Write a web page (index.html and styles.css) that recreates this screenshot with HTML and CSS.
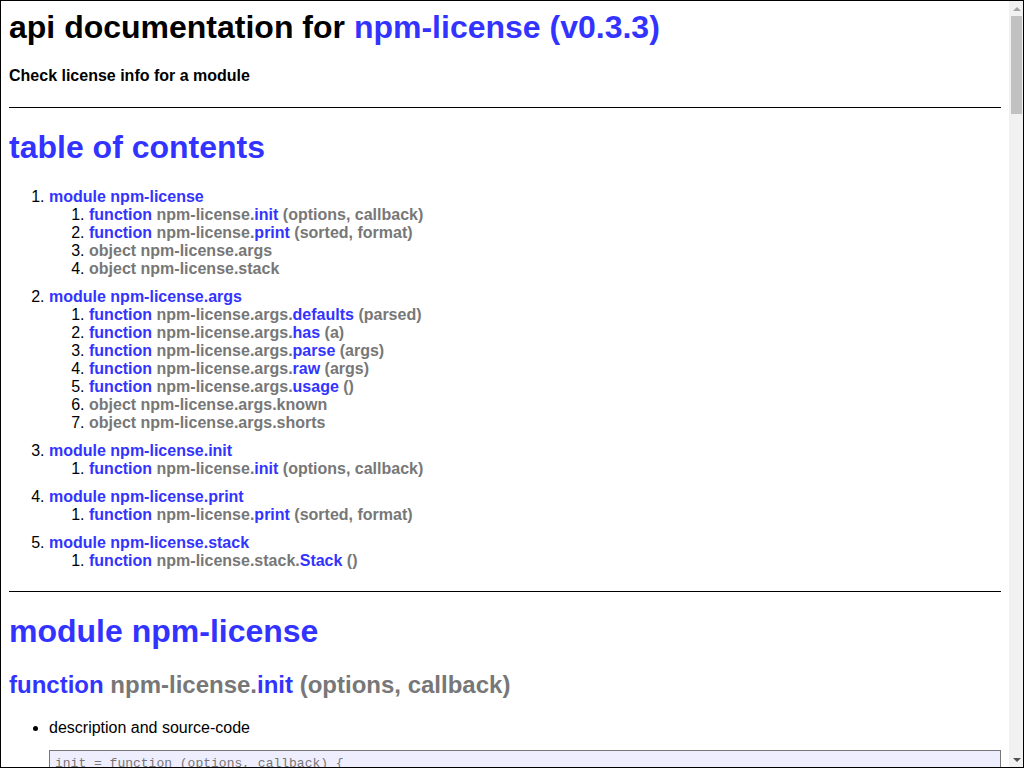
FILE: index.html
```html
<!DOCTYPE html>
<html lang="en">
<head>
<meta charset="utf-8">
<title>api documentation for npm-license (v0.3.3)</title>
<link rel="stylesheet" href="styles.css">
</head>
<body>
<div class="window">
<div class="viewport">
<div class="apidoc">
  <h1 class="doc-title">api documentation for <a class="lnk" href="#">npm-license (v0.3.3)</a></h1>
  <h4 class="doc-desc">Check license info for a module</h4>

  <div class="section">
    <h1 class="section-title"><a class="lnk" href="#toc">table of contents</a></h1>
    <ol class="toc">
      <li class="module-li"><a class="lnk" href="#m1">module npm-license</a>
        <ol>
          <li><a class="lnk" href="#e1">function <span class="sig">npm-license.</span>init <span class="sig">(options, callback)</span></a></li>
          <li><a class="lnk" href="#e2">function <span class="sig">npm-license.</span>print <span class="sig">(sorted, format)</span></a></li>
          <li><span class="sig">object npm-license.args</span></li>
          <li><span class="sig">object npm-license.stack</span></li>
        </ol>
      </li>
      <li class="module-li"><a class="lnk" href="#m2">module npm-license.args</a>
        <ol>
          <li><a class="lnk" href="#e3">function <span class="sig">npm-license.args.</span>defaults <span class="sig">(parsed)</span></a></li>
          <li><a class="lnk" href="#e4">function <span class="sig">npm-license.args.</span>has <span class="sig">(a)</span></a></li>
          <li><a class="lnk" href="#e5">function <span class="sig">npm-license.args.</span>parse <span class="sig">(args)</span></a></li>
          <li><a class="lnk" href="#e6">function <span class="sig">npm-license.args.</span>raw <span class="sig">(args)</span></a></li>
          <li><a class="lnk" href="#e7">function <span class="sig">npm-license.args.</span>usage <span class="sig">()</span></a></li>
          <li><span class="sig">object npm-license.args.known</span></li>
          <li><span class="sig">object npm-license.args.shorts</span></li>
        </ol>
      </li>
      <li class="module-li"><a class="lnk" href="#m3">module npm-license.init</a>
        <ol>
          <li><a class="lnk" href="#e8">function <span class="sig">npm-license.</span>init <span class="sig">(options, callback)</span></a></li>
        </ol>
      </li>
      <li class="module-li"><a class="lnk" href="#m4">module npm-license.print</a>
        <ol>
          <li><a class="lnk" href="#e9">function <span class="sig">npm-license.</span>print <span class="sig">(sorted, format)</span></a></li>
        </ol>
      </li>
      <li class="module-li"><a class="lnk" href="#m5">module npm-license.stack</a>
        <ol>
          <li><a class="lnk" href="#e10">function <span class="sig">npm-license.stack.</span>Stack <span class="sig">()</span></a></li>
        </ol>
      </li>
    </ol>
  </div>

  <div class="section">
    <h1 class="section-title"><a class="lnk" href="#m1" id="m1">module npm-license</a></h1>

    <div class="element">
      <h2 class="el-title"><a class="lnk" href="#e1" id="e1">function <span class="sig">npm-license.</span>init <span class="sig">(options, callback)</span></a></h2>
      <ul class="el-list">
        <li>description and source-code<pre class="code">init = function (options, callback) {
    console.log('scanning' , options.start);
    read(options.start, { dev: true }, function (err, json) {
        var data = flatten({
            deps: json,
            data: {},
            include: options.include,
            unknown: options.unknown,
            depth: options.depth
        });
        var sorted = {};
        Object.keys(data).sort().forEach(function (item) {
            if (!sorted[item]) {
                sorted[item] = data[item];
            }
        });
        callback(sorted);
    });
}</pre></li>
        <li>example usage<pre class="code">...
var license = require('npm-license');
license.init({
    start: process.cwd(),
    include: 'all'
}, function (json) {
    license.print(json);
});
...</pre></li>
      </ul>
    </div>
  </div>
</div>
</div>
<div class="scrollbar" aria-hidden="true">
  <div class="sb-btn"><span class="sb-arrow sb-up"></span></div>
  <div class="sb-track"><div class="sb-thumb"></div></div>
  <div class="sb-btn"><span class="sb-arrow sb-down"></span></div>
</div>
</div>
</body>
</html>
```

FILE: styles.css
```css
html,
body {
  margin: 0;
  padding: 0;
  background: #fff;
}

body {
  font-family: "Liberation Sans", Arial, Helvetica, sans-serif;
  font-size: 16px;
  color: #000;
}

.window {
  display: flex;
  height: 100vh;
  box-sizing: border-box;
  border: 1px solid #000;
  overflow: hidden;
}

.viewport {
  flex: 1;
  min-width: 0;
  overflow: hidden;
}

.apidoc {
  margin: 8px;
}

/* scrollbar */
.scrollbar {
  width: 15px;
  margin-right: -1px;
  display: flex;
  flex-direction: column;
  background: #f1f1f1;
  position: relative;
}

.sb-btn {
  height: 15px;
  display: flex;
  align-items: center;
  justify-content: center;
}

.sb-arrow {
  width: 0;
  height: 0;
  border-left: 4px solid transparent;
  border-right: 4px solid transparent;
}

.sb-up {
  border-bottom: 4px solid #a3a3a3;
}

.sb-down {
  border-top: 4px solid #505050;
}

.sb-track {
  flex: 1;
  padding: 0 2px;
}

.sb-thumb {
  height: 98px;
  background: #c1c1c1;
}

/* document */
.lnk {
  color: #33f;
  font-weight: bold;
  text-decoration: none;
}

.sig {
  color: #777;
  font-weight: bold;
}

.doc-title {
  font-size: 32px;
  margin: 0 0 21.44px;
}

.doc-desc {
  font-size: 16px;
  margin: 21.28px 0;
}

.section {
  border-top: 1px solid #000;
  margin-top: 20px;
}

.section-title {
  font-size: 32px;
  margin: 21.44px 0;
}

.toc {
  margin: 16px 0 21px;
  padding-left: 40px;
}

.toc ol {
  margin: 0;
  padding-left: 40px;
}

.module-li {
  margin-top: 10px;
}

.el-title {
  font-size: 24px;
  margin: 19.92px 0;
}

.el-list {
  margin: 16px 0;
  padding-left: 40px;
}

.code {
  font-family: "Liberation Mono", "Courier New", monospace;
  font-size: 13px;
  margin: 13px 0;
  background: #eef;
  border: 1px solid #777;
  color: #777;
  padding: 5px;
  white-space: pre-wrap;
  overflow-wrap: break-word;
}
```
